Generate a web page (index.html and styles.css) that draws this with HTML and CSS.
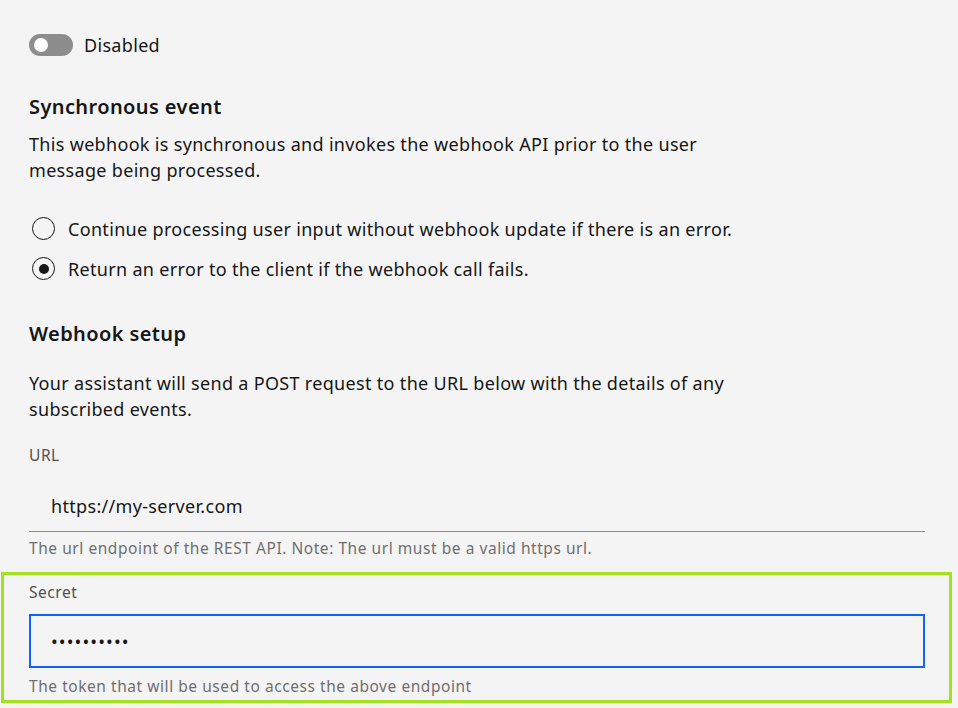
FILE: index.html
```html
<!DOCTYPE html>
<html>
<head>
<meta charset="utf-8">
<link rel="stylesheet" href="styles.css">
</head>
<body>
<div class="page">
  <div class="toggle-row">
    <span class="toggle"><span class="knob"></span></span>
    <span class="toggle-text">Disabled</span>
  </div>

  <h2 class="heading h-sync">Synchronous event</h2>
  <p class="para p-sync">This webhook is synchronous and invokes the webhook API prior to the user<br>message being processed.</p>

  <div class="radios">
    <label class="radio"><span class="circle"></span><span>Continue processing user input without webhook update if there is an error.</span></label>
    <label class="radio"><span class="circle checked"></span><span>Return an error to the client if the webhook call fails.</span></label>
  </div>

  <h2 class="heading h-setup">Webhook setup</h2>
  <p class="para p-setup">Your assistant will send a POST request to the URL below with the details of any<br>subscribed events.</p>

  <div class="field url-field">
    <div class="label">URL</div>
    <div class="input underline">https://my-server.com</div>
    <div class="helper">The url endpoint of the REST API. Note: The url must be a valid https url.</div>
  </div>

  <div class="highlight">
    <div class="label">Secret</div>
    <div class="input focused"><span class="dots">••••••••••</span></div>
    <div class="helper helper-secret">The token that will be used to access the above endpoint</div>
  </div>
</div>
</body>
</html>
```

FILE: styles.css
```css
html, body {
  margin: 0;
  padding: 0;
  background: #f4f4f4;
}
body {
  font-family: "Noto Sans", "Open Sans", sans-serif;
  color: #161616;
}
.page {
  width: 896px;
  padding: 34px 0 0 29px;
}
.toggle-row {
  display: flex;
  align-items: center;
  height: 22px;
}
.toggle {
  width: 44px;
  height: 22px;
  border-radius: 11px;
  background: #8d8d8d;
  display: flex;
  align-items: center;
  padding-left: 5px;
  box-sizing: border-box;
}
.knob {
  width: 14px;
  height: 14px;
  border-radius: 50%;
  background: #fff;
}
.toggle-text {
  margin-left: 11px;
  font-size: 18px;
  letter-spacing: 0.32px;
  line-height: 22px;
}
.heading {
  margin: 0;
  font-size: 20px;
  line-height: 25px;
  font-weight: 600;
  letter-spacing: 0.4px;
}
.h-sync { margin-top: 38px; }
.h-setup { margin-top: 40px; }
.para {
  margin: 0;
  font-size: 18px;
  letter-spacing: 0.32px;
  line-height: 25.5px;
}
.p-sync { margin-top: 13px; }
.p-setup { margin-top: 25px; }
.radios {
  margin-top: 33px;
  display: flex;
  flex-direction: column;
  gap: 15px;
}
.radio {
  display: flex;
  align-items: center;
  height: 25px;
  font-size: 18px;
  letter-spacing: 0.32px;
  padding-left: 3px;
}
.circle {
  width: 23px;
  height: 23px;
  box-sizing: border-box;
  border: 1.3px solid #161616;
  border-radius: 50%;
  margin-right: 13px;
  display: flex;
  align-items: center;
  justify-content: center;
  flex: none;
}
.circle.checked::after {
  content: "";
  width: 10px;
  height: 10px;
  border-radius: 50%;
  background: #161616;
}
.label {
  font-size: 15.5px;
  letter-spacing: 0.55px;
  line-height: 20px;
  color: #525252;
}
.url-field { margin-top: 23px; }
.input {
  box-sizing: border-box;
  height: 51px;
  margin-top: 16px;
  display: flex;
  align-items: center;
  padding-left: 22px;
  font-size: 18px;
  letter-spacing: 0.32px;
}
.underline {
  border-bottom: 1px solid #8d8d8d;
}
.helper {
  margin-top: 6px;
  font-size: 15.5px;
  letter-spacing: 0.55px;
  line-height: 20px;
  color: #6f6f6f;
}
.highlight {
  margin-top: 14px;
  margin-left: -28px;
  width: 951px;
  box-sizing: border-box;
  border: 3px solid #a3e21f;
  padding: 7px 24px 4px 25px;
}
.highlight .input {
  margin-top: 12px;
  height: 54px;
  border: 2px solid #0f62fe;
  width: 896px;
  padding-left: 20px;
}
.dots {
  font-size: 18px;
  letter-spacing: 1.1px;
}
.helper-secret { margin-top: 8px; }
```
